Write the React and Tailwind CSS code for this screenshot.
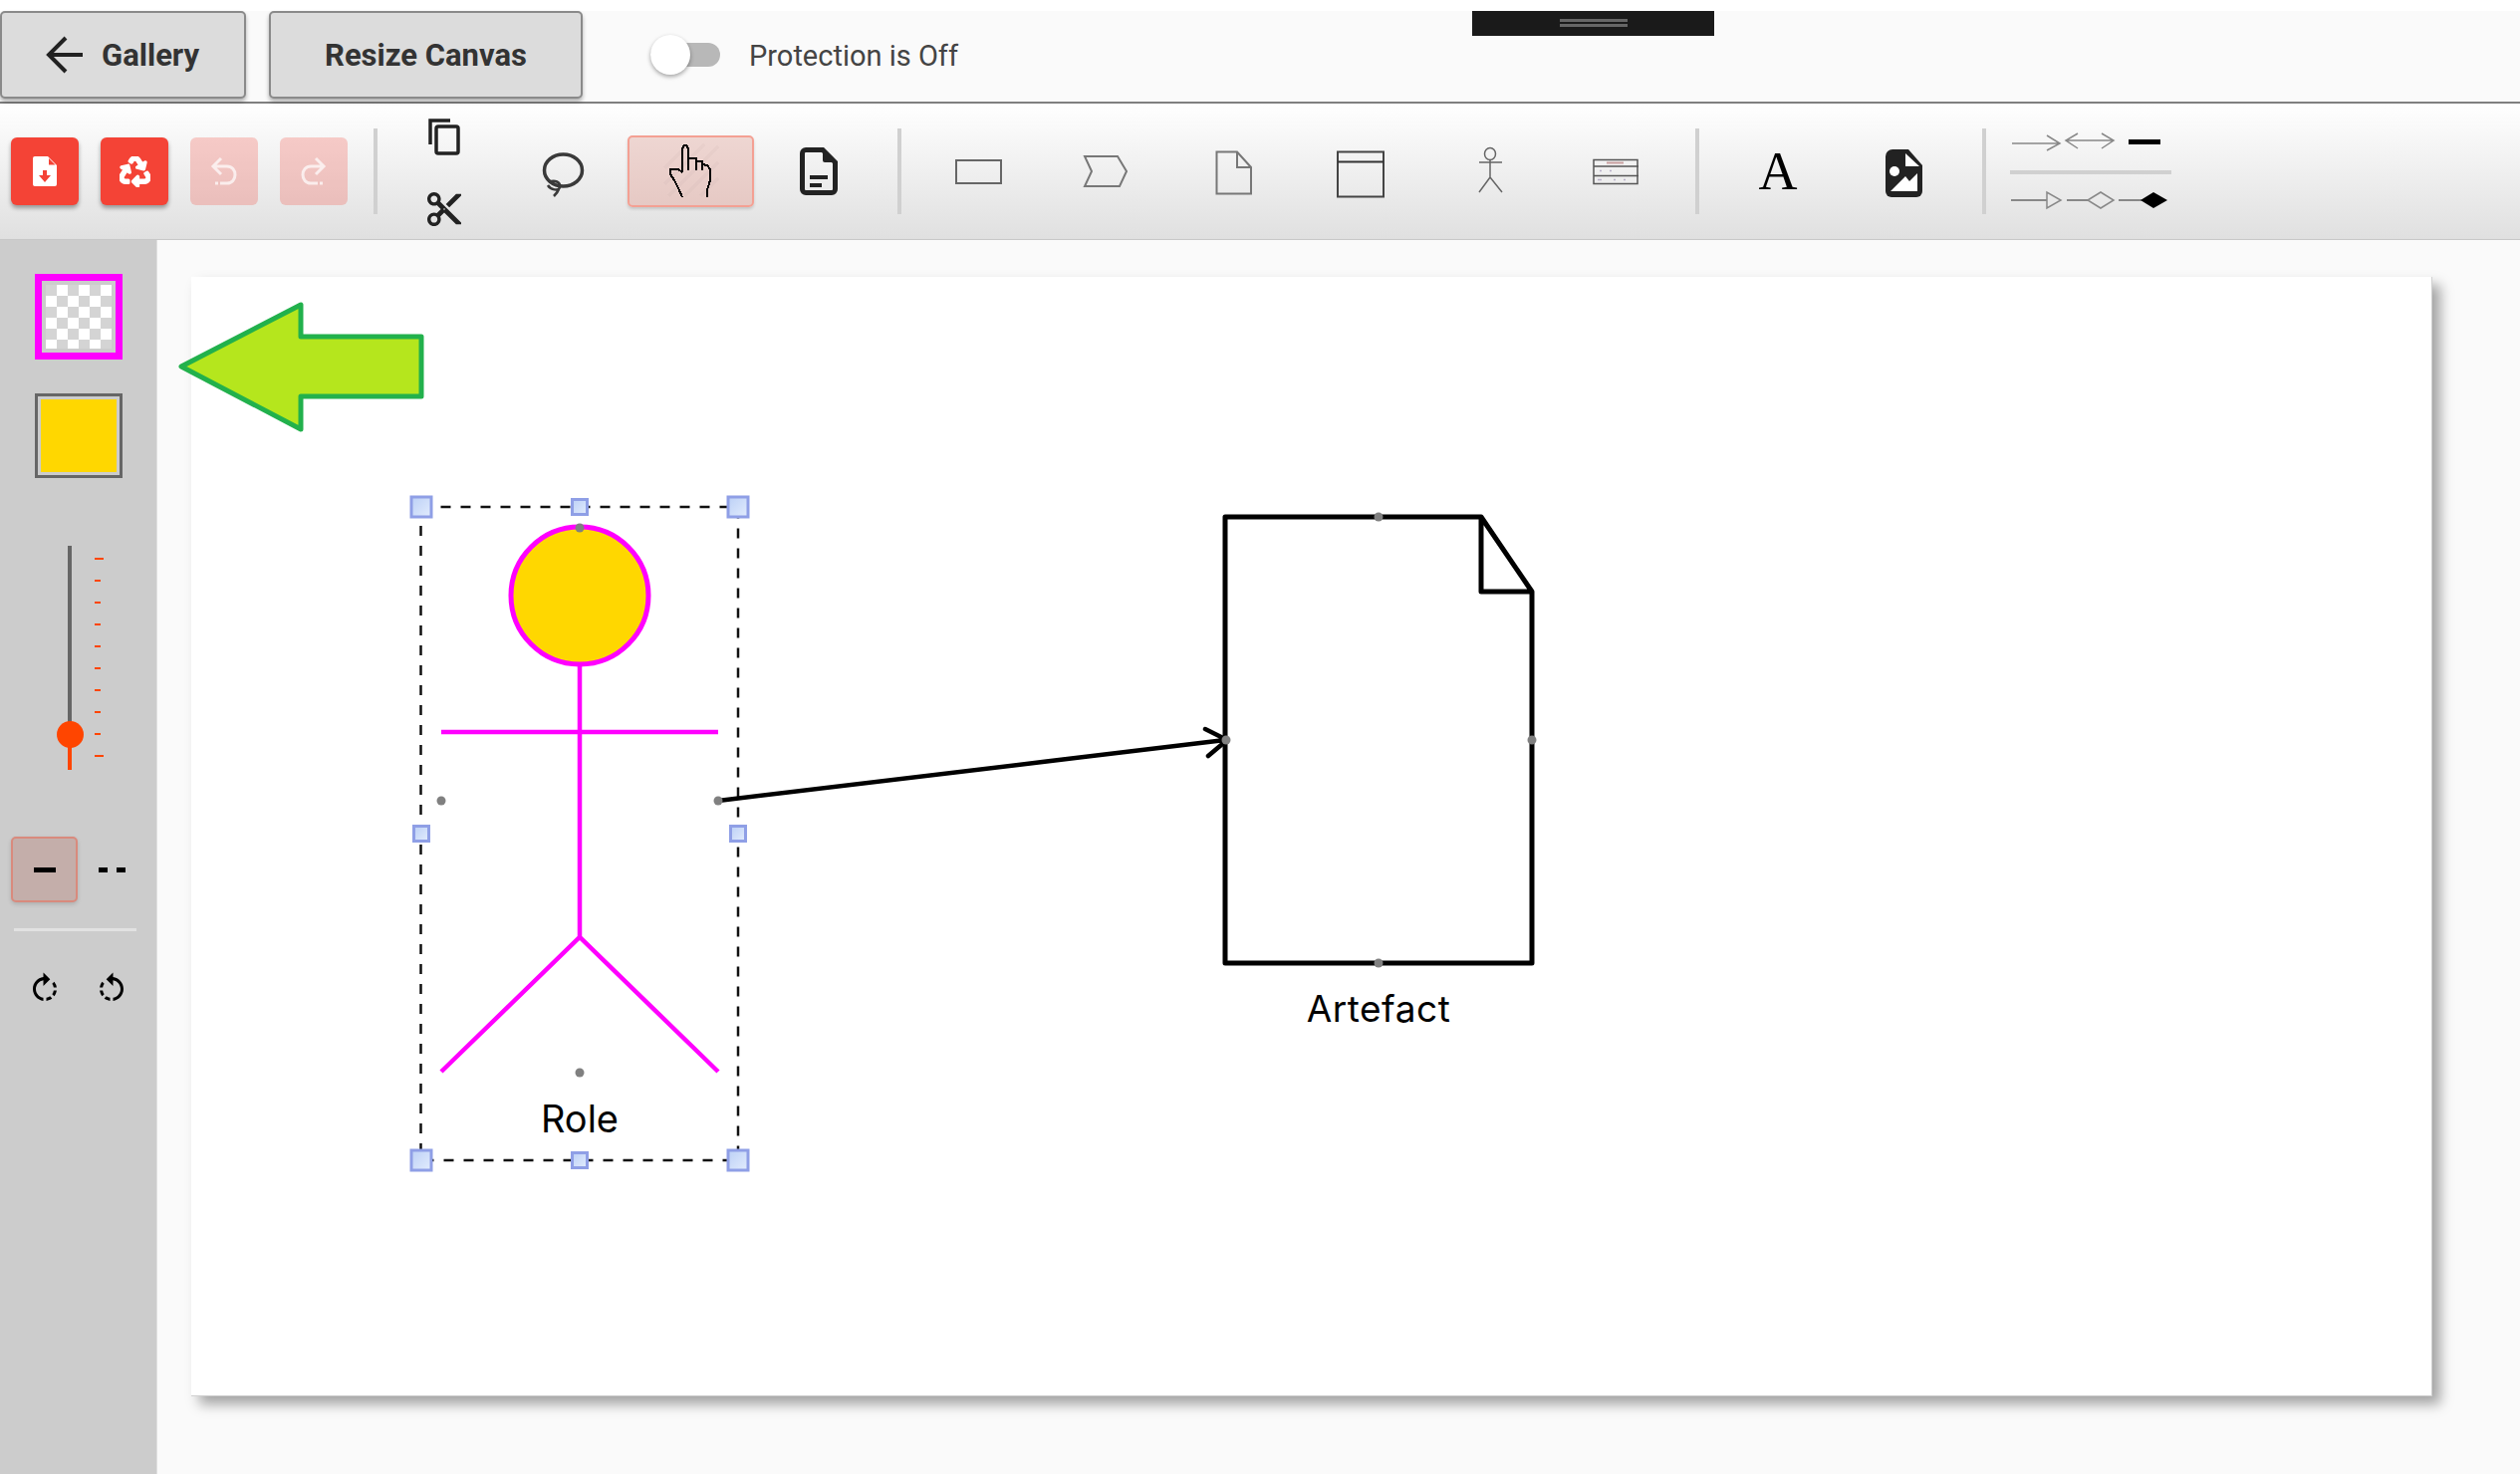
import React from 'react';
import { FaRecycle } from 'react-icons/fa';
import { MdRotateLeft, MdRotateRight } from 'react-icons/md';

// svg whose viewBox uses the page's own x range, so shapes can be read off the screenshot
const ToolSvg = ({ x, w, ml, children }) => (
  <svg
    viewBox={`${x} 130 ${w} 84`}
    width={w}
    height={84}
    fill="none"
    className="shrink-0"
    style={{ marginLeft: ml }}
  >
    {children}
  </svg>
);

const Separator = ({ className }) => <div className={`w-[4px] h-[86px] shrink-0 bg-[#d0d0d0] ${className}`} />;

const ToolbarButton = ({ disabled, children }) => (
  <div
    className={`w-[68px] h-[68px] shrink-0 rounded-[6px] flex items-center justify-center ${
      disabled ? 'bg-[#f44336]/25' : 'bg-[#f44336] shadow-[0_3px_4px_rgba(0,0,0,0.35)]'
    }`}
  >
    {children}
  </div>
);

const Handle = ({ cx, cy, s }) => (
  <rect x={cx - s / 2} y={cy - s / 2} width={s} height={s} fill="url(#handle)" stroke="#8f9fe6" strokeWidth="3" />
);

const Port = ({ cx, cy }) => <circle cx={cx} cy={cy} r="4.5" fill="#808080" />;

const Toolbar = () => (
  <div className="h-[137px] flex items-center pl-[11px] border-b-[1px] border-[#c8c8c8] bg-gradient-to-b from-white to-[#e0e0e0]">
    <div className="flex gap-[22px]">
      <ToolbarButton>
        <svg width="24" height="30" viewBox="0 0 24 30">
          <path d="M2 0H15L24 9V28A2 2 0 0 1 22 30H2A2 2 0 0 1 0 28V2A2 2 0 0 1 2 0Z" fill="#fff" />
          <path d="M16 2L22.5 8.5H16Z" fill="#f44336" />
          <path d="M10 14H14V19H18L12 26L6 19H10Z" fill="#f44336" />
        </svg>
      </ToolbarButton>
      <ToolbarButton>
        <FaRecycle size={31} color="#fff" stroke="#fff" strokeWidth={26} />
      </ToolbarButton>
      <ToolbarButton disabled>
        <svg width="30" height="30" viewBox="210 157 30 30" fill="none" stroke="#fff" strokeOpacity="0.7" strokeWidth="3">
          <path d="M222 159L214 167L222 175M214 167H228C233 167 236 171 236 175.500C236 180 233 184 228 184H221" />
          <path d="M216 184H219" />
        </svg>
      </ToolbarButton>
      <ToolbarButton disabled>
        <svg width="30" height="30" viewBox="300 157 30 30" fill="none" stroke="#fff" strokeOpacity="0.7" strokeWidth="3">
          <path d="M317 159L325 167L317 175M325 167H312C307 167 304 171 304 175.500C304 180 307 184 312 184H319" />
          <path d="M321 184H324" />
        </svg>
      </ToolbarButton>
    </div>
    <Separator className="ml-[26px]" />

    {/* copy and cut stack taller than the other tools */}
    <div className="w-[36px] ml-[49px] shrink-0 flex flex-col items-center gap-[35px]">
      <svg viewBox="428 118 36 40" width="36" height="40" fill="none" stroke="#222" strokeWidth="3.500">
        <path d="M452 121H432V145" />
        <rect x="438" y="127" width="22" height="27" rx="2" />
      </svg>
      <svg viewBox="2 2 20 20" width="34" height="34" fill="#222">
        <path d="M9.64 7.64c.23-.5.36-1.05.36-1.64 0-2.21-1.79-4-4-4S2 3.79 2 6s1.79 4 4 4c.59 0 1.14-.13 1.64-.36L10 12l-2.36 2.36C7.14 14.13 6.59 14 6 14c-2.21 0-4 1.79-4 4s1.79 4 4 4 4-1.790 4-4c0-.59-.13-1.14-.36-1.64L12 14l7 7h3v-1L9.64 7.64zM6 8c-1.1 0-2-.89-2-2s.9-2 2-2 2 .89 2 2-.9 2-2 2zm0 12c-1.1 0-2-.89-2-2s.9-2 2-2 2 .89 2 2-.9 2-2 2zm6-7.500c-.28 0-.5-.22-.5-.5s.22-.5.5-.5.5.22.5.5-.22.5-.5.5zM19 3l-6 6 2 2 7-7V3h-3z" />
      </svg>
    </div>

    <ToolSvg x={543} w={45} ml={79}>
      <ellipse cx="565.500" cy="171" rx="19" ry="16" stroke="#3a3a3a" strokeWidth="3.500" />
      <path d="M551 183C557 180 563 183 562 188C561 192 553 191 550 186M561 190C560 193 558 195 556 197" stroke="#3a3a3a" strokeWidth="2.500" />
    </ToolSvg>

    <div className="w-[127px] h-[72px] shrink-0 ml-[42px] rounded-[5px] border-2 border-[#f4a093] bg-gradient-to-b from-[#eed6d2] to-[#e6c9c4] shadow-[0_2px_3px_rgba(0,0,0,0.15)] flex items-center justify-center">
      <svg viewBox="664 142 62 62" width="62" height="62" fill="none" shapeRendering="crispEdges">
        <path d="M668 170L690 148M668 186L708 146M672 198L722 148M688 198L722 164M704 198L722 180" stroke="#000" strokeOpacity="0.02" strokeWidth="3" />
        <path
          d="M686 174V150L688 147H690L692 150V160H700V163H706V166L711 167L714 171V182L711 192V199M692 160V172M700 162V172M706 166V172M686 174L682 171H674V176L678 182L682 190L686 199"
          stroke="#000"
          strokeWidth="2"
        />
      </svg>
    </div>

    <svg viewBox="0 0 38 48" width="38" height="48" fill="none" className="shrink-0 ml-[46px]">
      <path d="M6 2.500H23L35.500 15V42A3.500 3.500 0 0 1 32 45.500H6A3.500 3.500 0 0 1 2.500 42V6A3.500 3.500 0 0 1 6 2.500Z" stroke="#222" strokeWidth="5" />
      <path d="M23 2L36 15H25A2 2 0 0 1 23 13Z" fill="#222" />
      <path d="M10 28H28V32H10ZM10 36H22V40H10Z" fill="#222" />
    </svg>
    <Separator className="ml-[60px]" />

    <ToolSvg x={959} w={47} ml={54}>
      <rect x="960" y="161" width="45" height="23" stroke="#666" strokeWidth="2" />
    </ToolSvg>
    <ToolSvg x={1087} w={45} ml={81}>
      <path d="M1089 157H1122L1131 172L1124 187H1089L1096 172Z" stroke="#777" strokeWidth="2" />
    </ToolSvg>
    <ToolSvg x={1220} w={37} ml={88}>
      <path d="M1221.500 152.500H1242L1256 168V194.500H1221.500ZM1242 152.500V168H1256" stroke="#777" strokeWidth="2" />
    </ToolSvg>
    <ToolSvg x={1342} w={48} ml={85}>
      <rect x="1343" y="152.500" width="46" height="45" stroke="#444" strokeWidth="2" />
      <path d="M1343 162.500H1389" stroke="#333" strokeWidth="2" />
    </ToolSvg>
    <ToolSvg x={1484} w={25} ml={94}>
      <ellipse cx="1496" cy="154.500" rx="5.500" ry="6" stroke="#666" strokeWidth="1.500" />
      <path d="M1496 160.500V178M1485 163H1508M1496 178L1485 193M1496 178L1508 193" stroke="#666" strokeWidth="1.500" />
    </ToolSvg>
    <ToolSvg x={1599} w={47} ml={90}>
      <rect x="1600" y="160.500" width="44" height="24" stroke="#555" strokeWidth="1.500" />
      <path d="M1600 167H1645M1600 176.500H1645" stroke="#555" strokeWidth="1.500" />
      <path d="M1613 163.500H1630" stroke="#c9a0a0" strokeWidth="2" />
      <path d="M1606 171.500H1608M1616 171.500H1618M1604 180.500H1608M1620 180.500H1622M1630 180.500H1632" stroke="#b9b0c9" strokeWidth="1.500" />
    </ToolSvg>
    <Separator className="ml-[56px]" />

    <div className="w-[36px] ml-[61px] shrink-0 flex justify-center font-['Liberation_Serif',serif] text-[54px] leading-none text-black">
      A
    </div>
    <ToolSvg x={1893} w={37} ml={90}>
      <path d="M1900 150H1916L1930 166V192A6 6 0 0 1 1924 198H1899A6 6 0 0 1 1893 192V157A7 7 0 0 1 1900 150Z" fill="#222" />
      <path d="M1913 154L1927 167H1913Z" fill="#fff" />
      <circle cx="1902" cy="172" r="5" fill="#fff" />
      <path d="M1898 192L1913 177L1917 182L1925 174V192Z" fill="#fff" />
    </ToolSvg>
    <Separator className="ml-[60px]" />

    <ToolSvg x={2018} w={162} ml={24}>
      <g stroke="#888" strokeWidth="1.500">
        <path d="M2020 144H2068M2055 136L2068 144L2055 151" />
        <path d="M2074 141H2122M2086 134L2074 141L2086 149M2110 134L2122 141L2110 149" />
        <path d="M2019 201H2055M2075 201H2096M2127 201H2150" strokeWidth="2" />
        <path d="M2055 193V209L2069 201Z" />
        <path d="M2096 201L2109 193L2122 201L2109 209Z" />
      </g>
      <path d="M2137 140H2169V145H2137Z" fill="#000" />
      <path d="M2018 171H2180V175H2018Z" fill="#d0d0d0" />
      <path d="M2149 201L2162 193L2176 201L2162 209Z" fill="#000" />
    </ToolSvg>
  </div>
);

const Sidebar = () => (
  <div className="w-[158px] shrink-0 bg-[#cccccc] border-r-[1px] border-[#e0e0e0] pt-[34px] flex flex-col">
    <div className="ml-[35px] w-[88px] h-[86px] border-[7px] border-[#ff00ff] p-[4px]">
      <div className="w-full h-full bg-[repeating-conic-gradient(#ffffff_0_25%,#d4d4d4_0_50%)] bg-[length:22px_22px]" />
    </div>
    <div className="ml-[35px] mt-[34px] w-[88px] h-[85px] border-[3px] border-[#666] p-[3px]">
      <div className="w-full h-full bg-[#ffd700]" />
    </div>

    {/* line width slider */}
    <div className="ml-[68px] mt-[68px] h-[225px] relative flex">
      <div className="w-[4px] flex flex-col">
        <div className="flex-1 bg-[#666]" />
        <div className="h-[36px] bg-[#ff4500]" />
      </div>
      <div className="absolute left-[-11px] top-[176px] w-[27px] h-[27px] rounded-full bg-[#ff4500]" />
      <div className="ml-[23px] mt-[12px] h-[200px] flex flex-col justify-between">
        {[9, 6, 6, 6, 6, 6, 6, 6, 6, 9].map((w, i) => (
          <div key={i} className="h-[2px] bg-[#ff4500]" style={{ width: w }} />
        ))}
      </div>
    </div>

    <div className="ml-[11px] mt-[67px] flex items-center">
      <div className="w-[67px] h-[66px] rounded-[5px] border-2 border-[#d98a7d] bg-[#c4aeaa] shadow-[0_2px_4px_rgba(0,0,0,0.15)] flex items-center justify-center">
        <div className="w-[22px] h-[5px] bg-black" />
      </div>
      <div className="ml-[21px] flex gap-[9px]">
        <div className="w-[9px] h-[5px] bg-black" />
        <div className="w-[9px] h-[5px] bg-black" />
      </div>
    </div>
    <div className="ml-[14px] mt-[26px] w-[123px] h-[3px] bg-[#e2e2e2]" />
    <div className="ml-[27px] mt-[40px] flex gap-[31px]">
      <MdRotateRight size={36} color="#000" />
      <MdRotateLeft size={36} color="#000" />
    </div>
  </div>
);

const Diagram = () => (
  // viewBox matches page coordinates; the green arrow pokes out of the paper on the left
  <svg viewBox="192 278 2250 1124" width="2250" height="1124" fill="none" className="absolute left-0 top-0 overflow-visible">
    <defs>
      <linearGradient id="handle" x1="0" y1="0" x2="1" y2="1">
        <stop offset="0" stopColor="#bcd0f6" />
        <stop offset="1" stopColor="#e2ecfd" />
      </linearGradient>
    </defs>

    <path d="M182 368L302 306V338H423V398H302V431Z" fill="#b5e61d" stroke="#22b14c" strokeWidth="5" strokeLinejoin="round" />

    <rect x="422.500" y="509" width="318.500" height="656" stroke="#111" strokeWidth="2.500" strokeDasharray="10 10" />

    <circle cx="582" cy="598" r="69" fill="#ffd700" stroke="#ff00ff" strokeWidth="5" />
    <path d="M582 667V941M443 735H721M443 1076L582 941L721 1076" stroke="#ff00ff" strokeWidth="4.500" />
    <text x="582" y="1136.500" textAnchor="middle" fill="#000" className="font-['Inter',sans-serif] text-[38px]">
      Role
    </text>

    <path d="M1230 519H1487L1538 594V967H1230ZM1487 519V594H1538" stroke="#000" strokeWidth="5" strokeLinejoin="round" />
    <text x="1384" y="1025.500" textAnchor="middle" fill="#000" className="font-['Inter',sans-serif] text-[37px] tracking-[0.5px]">
      Artefact
    </text>

    <path d="M721 804L1230 743M1210 732L1232 743L1213 759" stroke="#000" strokeWidth="4.500" strokeLinecap="round" strokeLinejoin="round" />

    <Port cx={582} cy={530} />
    <Port cx={443} cy={804} />
    <Port cx={721} cy={804} />
    <Port cx={582} cy={1077} />
    <Port cx={1384} cy={519} />
    <Port cx={1538} cy={743} />
    <Port cx={1384} cy={967} />
    <Port cx={1231} cy={743} />

    <Handle cx={423} cy={509} s={20} />
    <Handle cx={582} cy={509} s={15} />
    <Handle cx={741} cy={509} s={20} />
    <Handle cx={423} cy={837} s={15} />
    <Handle cx={741} cy={837} s={15} />
    <Handle cx={423} cy={1165} s={20} />
    <Handle cx={582} cy={1165} s={15} />
    <Handle cx={741} cy={1165} s={20} />
  </svg>
);

export default function App() {
  return (
    <div className="w-[2530px] h-[1480px] flex flex-col overflow-hidden bg-white font-['Roboto',sans-serif]">
      <div className="h-[11px] shrink-0 bg-white" />

      {/* top bar */}
      <div className="h-[93px] shrink-0 relative z-10 bg-[#fafafa] border-b-2 border-[#808080] flex items-start">
        <div className="w-[247px] h-[88px] rounded-[5px] border-2 border-[#8a8a8a] bg-[#dcdcdc] shadow-[0_3px_4px_rgba(0,0,0,0.3)] flex items-center pl-[44px]">
          <svg width="38" height="38" viewBox="0 0 38 38" fill="none" stroke="#222" strokeWidth="4">
            <path d="M37 19H4M20 2L3 19L20 36" />
          </svg>
          <span className="ml-[18px] mt-[2px] text-[31px] font-bold text-[#333]">Gallery</span>
        </div>
        <div className="ml-[23px] w-[315px] h-[88px] rounded-[5px] border-2 border-[#8a8a8a] bg-[#dcdcdc] shadow-[0_3px_4px_rgba(0,0,0,0.3)] flex items-center justify-center">
          <span className="mt-[2px] text-[31px] font-bold text-[#333]">Resize Canvas</span>
        </div>

        <div className="ml-[68px] mt-[32px] w-[70px] h-[24px] rounded-full bg-[#b8b8b8] relative">
          <div className="absolute left-0 top-[-8px] w-[40px] h-[40px] rounded-full bg-white shadow-[0_2px_4px_rgba(0,0,0,0.35)]" />
        </div>
        <span className="ml-[29px] mt-[27px] text-[29px] leading-[36px] text-[#444]">Protection is Off</span>

        <div className="absolute left-[1478px] top-0 w-[243px] h-[25px] bg-[#1a1a1a] flex flex-col items-center pt-[8px] gap-[2px]">
          <div className="w-[68px] h-[3px] bg-[#666]" />
          <div className="w-[68px] h-[3px] bg-[#666]" />
        </div>
      </div>

      <Toolbar />

      <div className="flex-1 flex min-h-0">
        <Sidebar />
        <div className="flex-1 bg-[#fafafa] pl-[34px] pt-[37px]">
          <div className="w-[2250px] h-[1124px] relative bg-white border-r-[1px] border-b-[1px] border-[#d0d0d0] shadow-[8px_8px_12px_rgba(0,0,0,0.35)]">
            <Diagram />
          </div>
        </div>
      </div>
    </div>
  );
}
